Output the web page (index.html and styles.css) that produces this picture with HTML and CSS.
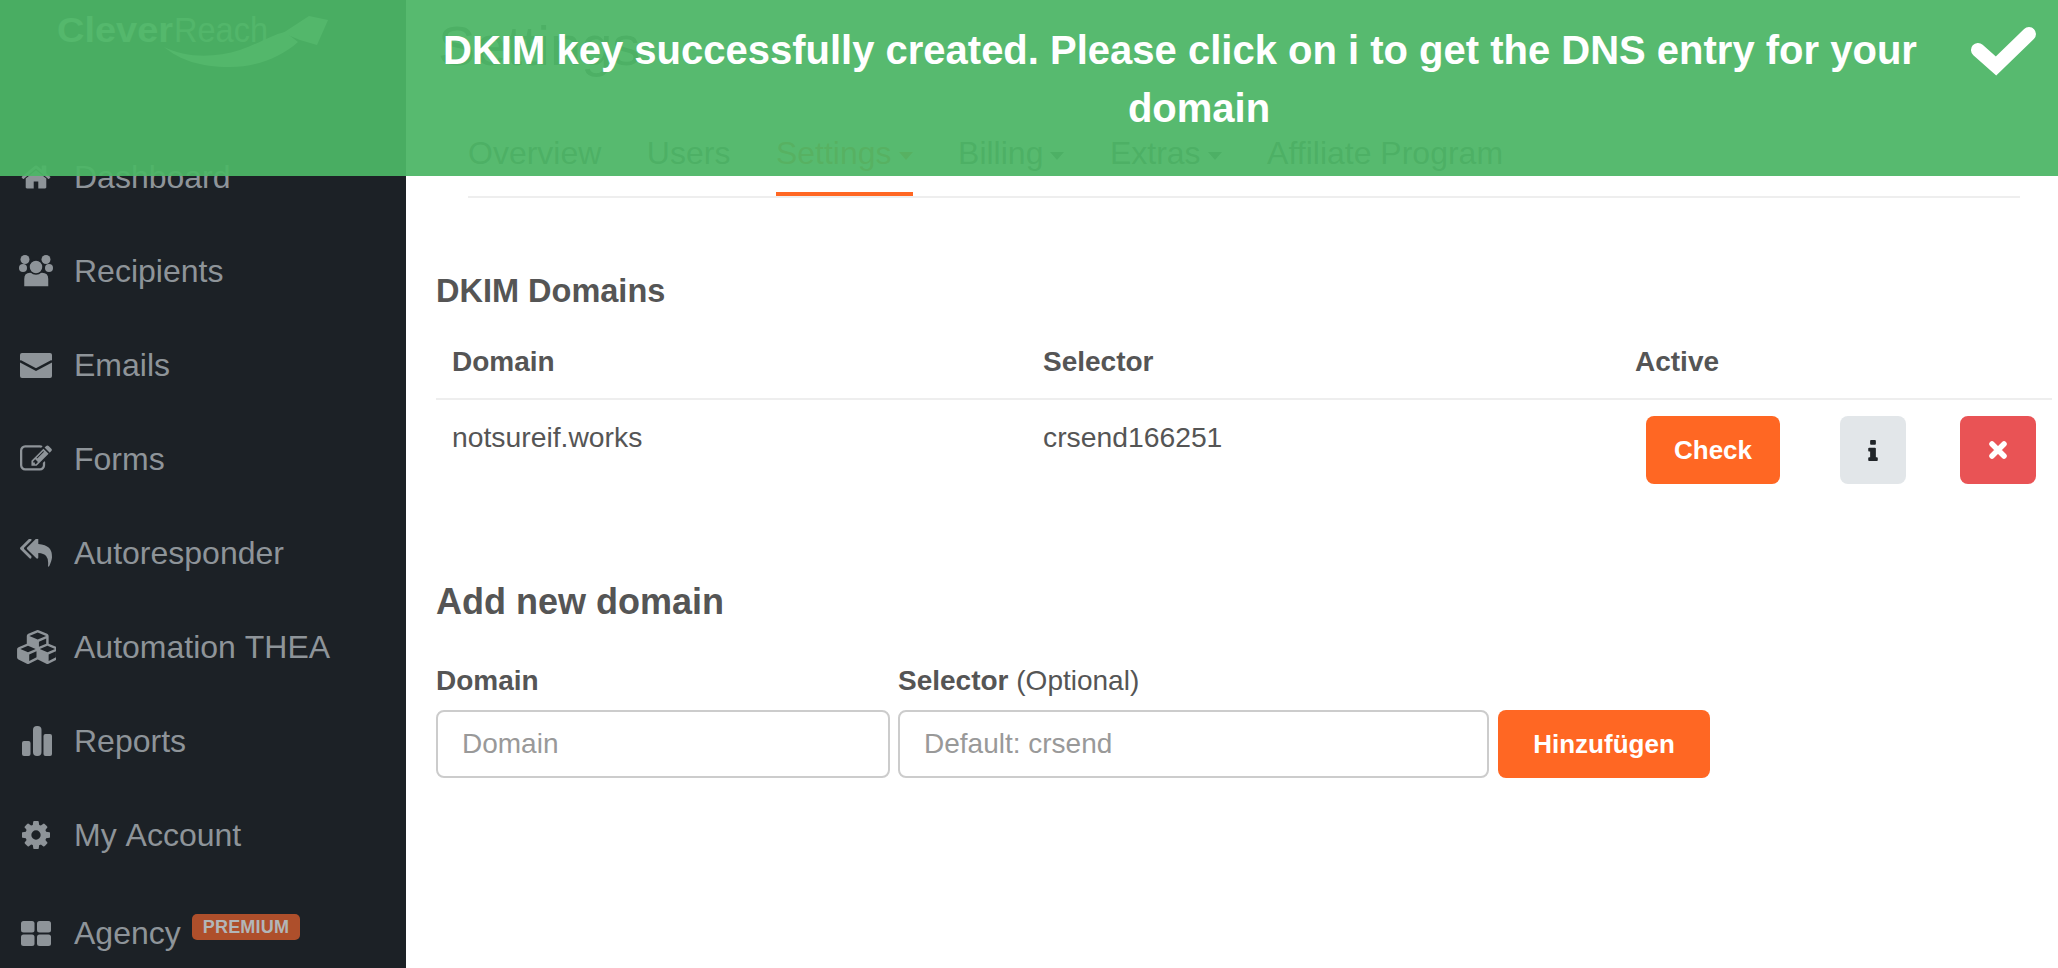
FILE: index.html
```html
<!DOCTYPE html>
<html>
<head>
    <meta charset="utf-8">
    <title>Settings - DKIM Domains</title>
    <meta name="viewport" content="width=device-width, initial-scale=1.0">
    <link rel="stylesheet" href="styles.css">
</head>
<body>
<div class="toast">
    <div class="toast-text"><span class="toast-first">DKIM key successfully created. Please click on i to get the DNS entry for your</span><br>domain</div>
    <svg class="toast-check" viewBox="0 0 66 50"><polyline points="7,23 25,39 58,7" fill="none" stroke="#fff" stroke-width="14" stroke-linecap="round" stroke-linejoin="miter"/></svg>
</div>
<div class="app">
    <aside class="sidebar">
        <svg class="logo" viewBox="0 0 406 130">
            <text x="57" y="42" class="logo-clever" textLength="116" lengthAdjust="spacingAndGlyphs">Clever</text>
            <text x="174" y="42" class="logo-reach" textLength="94" lengthAdjust="spacingAndGlyphs">Reach</text>
            <path d="M164 47 C185 58 215 58 240 50 C262 42 272 35 285 32 L298 42 C280 58 255 67 230 67 C200 67 180 60 164 47 Z" class="logo-mark"/>
            <path d="M283 33 L309 16 L328 20 L317 45 L300 40 Z" class="logo-mark"/>
        </svg>
        <nav>
            <a class="nav-item"><span class="nav-icon"><svg width="32" height="32" viewBox="0 0 1792 1792"><path d="M1472 992v480q0 26-19 45t-45 19h-384v-384h-256v384h-384q-26 0-45-19t-19-45v-480q0-1 .5-3t.5-3l575-474 575 474q1 2 1 6zm223-69l-62 74q-8 9-21 11h-3q-13 0-21-7l-692-577-692 577q-12 8-24 7-13-2-21-11l-62-74q-8-10-7-23.500t11-21.500l719-599q32-26 76-26t76 26l244 204v-195q0-14 9-23t23-9h192q14 0 23 9t9 23v408l219 182q10 8 11 21.500t-7 23.500z"/></svg></span>Dashboard</a>
            <a class="nav-item"><span class="nav-icon"><svg width="34" height="32" viewBox="0 0 34 32"><circle cx="6" cy="4.500" r="4.500"/><circle cx="27" cy="4.500" r="4.500"/><circle cx="4" cy="13" r="4"/><circle cx="30" cy="13" r="4"/><path class="icon-cut" d="M4.500 32 V24 Q4.500 17 11 17 H23 Q30 17 30 24 V32 Z"/><circle class="icon-cut" cx="17" cy="12" r="7"/></svg></span>Recipients</a>
            <a class="nav-item"><span class="nav-icon"><svg width="32" height="25" viewBox="0 0 32 25"><rect width="32" height="25" rx="2"/><polyline class="icon-line" points="0,8 16,16.500 32,8"/></svg></span>Emails</a>
            <a class="nav-item"><span class="nav-icon"><svg width="32" height="28" viewBox="0 128 1792 1536"><path d="M888 1184l116-116-152-152-116 116v56h96v96h56zm440-720q-16-16-33 1l-350 350q-17 17-1 33t33-1l350-350q17-17 1-33zm80 594v190q0 119-84.500 203.500t-203.500 84.500h-832q-119 0-203.500-84.500t-84.500-203.500v-832q0-119 84.500-203.500t203.500-84.500h832q63 0 117 25 15 7 18 23 3 17-9 29l-49 49q-14 14-32 8-23-6-45-6h-832q-66 0-113 47t-47 113v832q0 66 47 113t113 47h832q66 0 113-47t47-113v-126q0-13 9-22l64-64q15-15 35-7t20 29zm-96-738l288 288-672 672h-288v-288zm444 132l-92 92-288-288 92-92q28-28 68-28t68 28l152 152q28 28 28 68t-28 68z"/></svg></span>Forms</a>
            <a class="nav-item"><span class="nav-icon"><svg width="32" height="29" viewBox="0 128 1792 1600"><path d="M640 1082v70q0 42-39 59-13 5-25 5-27 0-45-19l-512-512q-19-19-19-45t19-45l512-512q29-31 70-14 39 17 39 59v69l-397 398q-19 19-19 45t19 45zm1152 38q0 58-17 133.500t-38.500 138-48 125-40.500 90.500l-20 40q-8 17-28 17-6 0-9-1-25-8-23-34 43-400-106-565-64-71-170.500-110.500t-267.500-52.500v251q0 42-39 59-13 5-25 5-27 0-45-19l-512-512q-19-19-19-45t19-45l512-512q29-31 70-14 39 17 39 59v262q411 28 599 221 169 173 169 509z"/></svg></span>Autoresponder</a>
            <a class="nav-item"><span class="nav-icon"><svg width="39" height="34" viewBox="0 0 2048 1792"><path d="M640 1632l384-192v-314l-384 164v342zm-64-454l404-173-404-173-404 173zm1088 454l384-192v-314l-384 164v342zm-64-454l404-173-404-173-404 173zm-448-293l384-165v-266l-384 164v267zm-64-379l441-189-441-189-441 189zm1088 518v416q0 36-19 67t-52 47l-448 224q-25 14-57 14t-57-14l-448-224q-5-2-7-4-2 2-7 4l-448 224q-25 14-57 14t-57-14l-448-224q-33-16-52-47t-19-67v-416q0-38 21.500-70t56.500-48l434-186v-400q0-38 21.500-70t56.500-48l448-192q23-10 50-10t50 10l448 192q35 16 56.500 48t21.500 70v400l434 186q36 16 57 48t21 70z"/></svg></span>Automation THEA</a>
            <a class="nav-item"><span class="nav-icon"><svg class="icon-reports" width="30" height="30" viewBox="0 0 30 30"><rect y="15" width="8.500" height="15" rx="2"/><rect x="11" width="8.500" height="30" rx="4"/><rect x="21.500" y="8" width="8.500" height="22" rx="2"/></svg></span>Reports</a>
            <a class="nav-item"><span class="nav-icon"><svg width="28" height="28" viewBox="128 128 1536 1536"><path d="M1152 896q0-106-75-181t-181-75-181 75-75 181 75 181 181 75 181-75 75-181zm512-109v222q0 12-8 23t-20 13l-185 28q-19 54-39 91 35 50 107 138 10 12 10 25t-9 23q-27 37-99 108t-94 71q-12 0-26-9l-138-108q-44 23-91 38-16 136-29 186-7 28-36 28h-222q-14 0-24.500-8.500t-11.500-21.500l-28-184q-49-16-90-37l-141 107q-10 9-25 9-14 0-25-11-126-114-165-168-7-10-7-23 0-12 8-23 15-21 51-66.500t54-70.500q-27-50-41-99l-183-27q-13-2-21-12.500t-8-23.500v-222q0-12 8-23t19-13l186-28q14-46 39-92-40-57-107-138-10-12-10-24 0-10 9-23 26-36 98.500-107.500t94.500-71.500q13 0 26 10l138 107q44-23 91-38 16-136 29-186 7-28 36-28h222q14 0 24.500 8.500t11.500 21.500l28 184q49 16 90 37l142-107q9-9 24-9 13 0 25 10 129 119 165 170 7 8 7 22 0 12-8 23-15 21-51 66.500t-54 70.500q26 50 41 98l183 28q13 2 21 12.500t8 23.500z"/></svg></span>My Account</a>
            <a class="nav-item nav-agency"><span class="nav-icon"><svg width="30" height="25" viewBox="0 0 30 25"><rect width="13.500" height="11.500" rx="2.500"/><rect x="16" width="14" height="11.500" rx="2.500"/><rect y="13.500" width="13.500" height="11.500" rx="2.500"/><rect x="16" y="13.500" width="14" height="11.500" rx="2.500"/></svg></span>Agency<span class="badge">PREMIUM</span></a>
        </nav>
    </aside>
    <main class="content">
        <h1>Settings</h1>
        <div class="tabs">
            <a class="tab">Overview</a>
            <a class="tab">Users</a>
            <a class="tab tab-active">Settings<span class="caret"></span></a>
            <a class="tab">Billing<span class="caret"></span></a>
            <a class="tab">Extras<span class="caret"></span></a>
            <a class="tab">Affiliate Program</a>
        </div>

        <h3 class="dkim-title">DKIM Domains</h3>
        <table class="dkim-table">
            <thead>
                <tr>
                    <th class="col-domain">Domain</th>
                    <th class="col-selector">Selector</th>
                    <th>Active</th>
                </tr>
            </thead>
            <tbody>
                <tr>
                    <td>notsureif.works</td>
                    <td>crsend166251</td>
                    <td>
                        <div class="row-actions">
                            <button class="btn btn-orange btn-check">Check</button>
                            <button class="btn btn-info"><svg width="10" height="21" viewBox="0 48 640 1408"><path d="M640 1264v128q0 26-19 45t-45 19h-512q-26 0-45-19t-19-45v-128q0-26 19-45t45-19h64v-384h-64q-26 0-45-19t-19-45v-128q0-26 19-45t45-19h384q26 0 45 19t19 45v576h64q26 0 45 19t19 45zm-128-1152v192q0 26-19 45t-45 19h-256q-26 0-45-19t-19-45v-192q0-26 19-45t45-19h256q26 0 45 19t19 45z"/></svg></button>
                            <button class="btn btn-delete"><svg width="18" height="18" viewBox="0 0 18 18"><path d="M3 3 L15 15 M15 3 L3 15" stroke="#fff" stroke-width="5.500" stroke-linecap="round"/></svg></button>
                        </div>
                    </td>
                </tr>
            </tbody>
        </table>

        <h2 class="add-title">Add new domain</h2>
        <form class="add-form">
            <div class="field field-domain">
                <label for="domain"><strong>Domain</strong></label>
                <input type="text" id="domain" placeholder="Domain">
            </div>
            <div class="field field-selector">
                <label for="selector"><strong>Selector</strong> (Optional)</label>
                <input type="text" id="selector" placeholder="Default: crsend">
            </div>
            <button type="button" class="btn btn-orange btn-add">Hinzufügen</button>
        </form>
    </main>
</div>
</body>
</html>
```

FILE: styles.css
```css
* { box-sizing: border-box; }
html, body { margin: 0; height: 100%; overflow: hidden; }
body { font-family: "Liberation Sans", Arial, sans-serif; color: #555; background: #fff; }

/* success message lies over the page head */
.toast { position: absolute; top: 0; left: 0; right: 0; height: 176px; z-index: 10; display: flex; align-items: flex-start; padding-left: 430px; background: rgba(76, 182, 102, 0.94); color: #fff; }
.toast-text { width: 1538px; padding-top: 21px; font-size: 40px; line-height: 58px; font-weight: bold; text-align: center; }
.toast-first { padding-right: 38px; }
.toast-check { width: 66px; height: 50px; margin: 27px 0 0 3px; }

.app { display: flex; height: 968px; }

.sidebar { width: 406px; flex: none; background: #1c2126; color: #8e9499; }
.logo { display: block; width: 406px; height: 130px; }
.logo-clever { font-size: 35px; font-weight: bold; fill: #c8d0cc; }
.logo-reach { font-size: 35px; fill: #aab4ae; }
.logo-mark { fill: #b8c8b8; }

.nav-item { display: flex; align-items: center; height: 94px; font-size: 32px; font-kerning: none; }
.nav-icon { width: 74px; flex: none; display: flex; justify-content: center; padding-right: 2px; }
.nav-icon svg { fill: #8e9499; }
.nav-icon .icon-reports { margin-left: 2px; }
.icon-cut { stroke: #1c2126; stroke-width: 1.500; }
.icon-line { fill: none; stroke: #1c2126; stroke-width: 2.500; }
.nav-agency { padding-top: 8px; }
.badge { align-self: flex-start; margin: 24px 0 0 11px; height: 26px; padding: 0 11px; border-radius: 5px; background: #ae4f2b; color: #b2b6b8; font-size: 18px; line-height: 26px; font-weight: bold; letter-spacing: .2px; }

.content { flex: 1; min-width: 0; padding: 0 6px 0 30px; }
h1 { margin: 0; height: 130px; padding: 14px 0 0 2px; font-size: 56px; line-height: 64px; font-weight: normal; }

.tabs { display: flex; gap: 45.5px; margin: 0 32px 0 32px; border-bottom: 2px solid #eee; font-size: 32px; }
.tab { padding: 3px 0 19px; line-height: 40px; border-bottom: 4px solid transparent; }
.tab-active { color: #ff6723; border-bottom-color: #ff6723; }
.caret { display: inline-block; margin-left: 7px; vertical-align: middle; border-top: 8px solid currentColor; border-left: 7px solid transparent; border-right: 7px solid transparent; }

.dkim-title { margin: 73px 0 0; font-size: 32.5px; line-height: 40px; font-weight: bold; }
.dkim-table { width: 100%; margin-top: 14px; border-collapse: collapse; table-layout: fixed; }
.dkim-table th { height: 74px; padding: 0 16px; text-align: left; font-size: 28px; border-bottom: 2px solid #eee; }
.dkim-table td { padding: 16px; vertical-align: top; font-size: 28.3px; line-height: 42px; }
.col-domain { width: 591px; }
.col-selector { width: 592px; }
.row-actions { display: flex; height: 68px; padding-left: 11px; }

.btn { display: flex; align-items: center; justify-content: center; height: 68px; padding: 0; border: none; border-radius: 8px; font-family: inherit; font-size: 26px; font-weight: bold; color: #fff; }
.btn-orange { background: #ff6723; }
.btn-check { width: 134px; }
.btn-info { width: 66px; margin-left: 60px; background: #e2e6e9; }
.btn-info svg { fill: #212529; }
.btn-delete { width: 76px; margin-left: 54px; background: #e95355; }

.add-title { margin: 80px 0 0; font-size: 36px; line-height: 44px; font-weight: bold; }
.add-form { display: flex; align-items: flex-end; margin-top: 40px; }
.field label { display: block; margin-bottom: 12px; font-size: 28px; line-height: 34px; }
.field input { display: block; width: 100%; height: 68px; padding: 0 24px; border: 2px solid #ccc; border-radius: 8px; font-family: inherit; font-size: 28px; color: #555; }
.field input::placeholder { color: #999; opacity: 1; }
.field-domain { width: 454px; }
.field-selector { width: 591px; margin-left: 8px; }
.btn-add { width: 212px; margin-left: 9px; }
```
